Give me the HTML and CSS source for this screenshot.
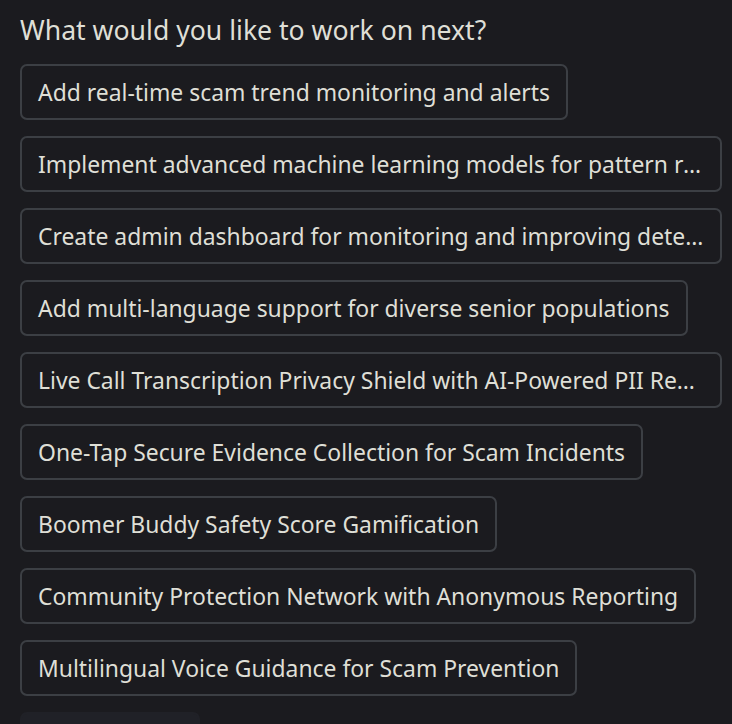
FILE: index.html
```html
<!DOCTYPE html>
<html>
<head>
<meta charset="utf-8">
<link rel="stylesheet" href="styles.css">
</head>
<body>
<div class="panel">
  <h2 class="title">What would you like to work on next?</h2>
  <div class="list">
    <button class="chip">Add real-time scam trend monitoring and alerts</button>
    <button class="chip">Implement advanced machine learning models for pattern recognition and detection</button>
    <button class="chip">Create admin dashboard for monitoring and improving detection accuracy</button>
    <button class="chip">Add multi-language support for diverse senior populations</button>
    <button class="chip">Live Call Transcription Privacy Shield with AI-Powered PII Redaction</button>
    <button class="chip">One-Tap Secure Evidence Collection for Scam Incidents</button>
    <button class="chip">Boomer Buddy Safety Score Gamification</button>
    <button class="chip">Community Protection Network with Anonymous Reporting</button>
    <button class="chip">Multilingual Voice Guidance for Scam Prevention</button>
    <button class="chip chip-soft">Explore more</button>
  </div>
</div>
</body>
</html>
```
FILE: styles.css
```css
html, body {
  margin: 0;
  padding: 0;
  background: #1b1b1f;
  height: 100%;
  overflow: hidden;
}
.panel {
  padding: 12px 10px 0 20px;
  font-family: "Noto Sans", sans-serif;
  color: #dfdfd6;
}
.title {
  margin: 0 0 16px 0;
  font-size: 26.6px;
  font-weight: 400;
  line-height: 36px;
}
.list {
  display: flex;
  flex-direction: column;
  align-items: flex-start;
  gap: 16px;
}
.chip {
  max-width: 100%;
  box-sizing: border-box;
  height: 56px;
  padding: 0 16px;
  border: 2px solid #3c3f44;
  border-radius: 7px;
  background: #1b1b1f;
  color: #dfdfd6;
  font-family: "Noto Sans", sans-serif;
  font-size: 22.9px;
  text-align: left;
  white-space: nowrap;
  overflow: hidden;
  text-overflow: ellipsis;
}
.chip-soft {
  background: #202127;
  border-color: #202127;
}
```
